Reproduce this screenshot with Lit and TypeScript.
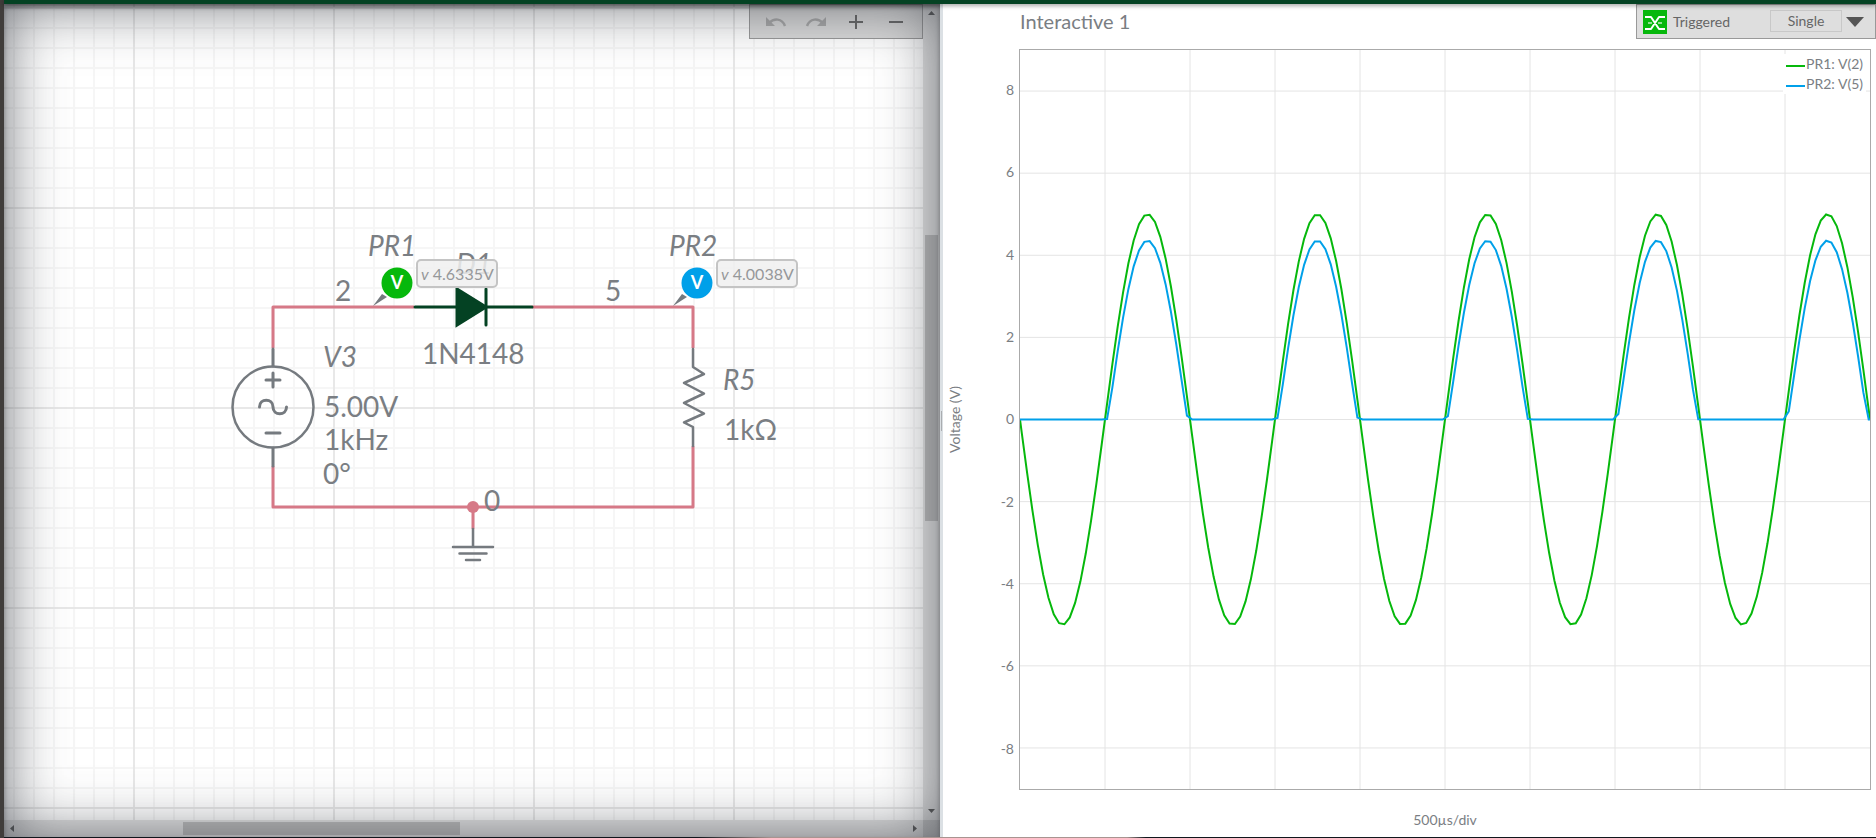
import { LitElement, html, svg, css } from "lit";
import { customElement, property } from "lit/decorators.js";

const DIV_US = 500;
const SPAN_US = 5000;
const STEP_US = 31.33;
const PHASE_US = 10.8;
const TICKS = [8, 6, 4, 2, 0, -2, -4, -6, -8];

/* Source voltage at probe PR1. */
const source = (t: number) => -5 * Math.sin((2 * Math.PI * t) / 1000);

/* Load voltage across 1k behind a 1N4148, by bisection on the diode equation. */
const load = (t: number) => {
  const v = source(t);
  if (v <= 0) return 0;
  let lo = 0;
  let hi = v;
  for (let i = 0; i < 40; i++) {
    const mid = (lo + hi) / 2;
    const sum = mid + 0.0445 * Math.log(1 + mid / 1000 / 2.52e-9);
    if (sum > v) hi = mid;
    else lo = mid;
  }
  return lo;
};

const trace = (f: (t: number) => number) => {
  const times = [0];
  for (let t = PHASE_US; t < SPAN_US; t += STEP_US) times.push(t);
  times.push(SPAN_US);
  return times.map((t) => `${t.toFixed(1)},${(-f(t) * 100).toFixed(1)}`).join(" ");
};

@customElement("schematic-canvas")
class SchematicCanvas extends LitElement {
  static styles = css`
    :host {
      display: block;
      min-width: 0;
      min-height: 0;
      overflow: hidden;
      background-color: #fff;
      background-image: linear-gradient(90deg, #e8e8e8 2px, transparent 2px),
        linear-gradient(#e8e8e8 2px, transparent 2px),
        linear-gradient(90deg, #f6f6f6 2px, transparent 2px),
        linear-gradient(#f6f6f6 2px, transparent 2px);
      background-size: 200px 200px, 200px 200px, 20px 20px, 20px 20px;
      background-position: 129px 3px, 129px 3px, 9px 3px, 9px 3px;
    }
    svg { display: block; width: 919px; height: 816px; }
    text { font-family: Lato, sans-serif; font-size: 28px; fill: #7a7e83; }
    .name { font-style: italic; }
    .wire { fill: none; stroke: #d67987; stroke-width: 3; stroke-linejoin: round; }
    .part { fill: none; stroke: #757a7f; stroke-width: 3; stroke-linecap: round; stroke-linejoin: round; }
    .thin { stroke-width: 2.5; }
    .node { fill: #d67987; }
    .diode { fill: #044223; stroke: #044223; stroke-width: 3; stroke-linecap: round; }
    .pointer { fill: #757a7f; }
    .letter { fill: #fff; font-weight: 700; font-size: 18px; text-anchor: middle; }
    .box { fill: #f0f0f0; fill-opacity: 0.85; stroke: #c4c4c4; stroke-width: 2; }
    .reading { font-size: 16px; fill: #96989a; }
  `;

  private probe(x: number, color: string, value: string) {
    return svg`
      <path class="pointer" d="M${x - 24} 306 L${x - 15} 294 L${x - 10} 297 Z"></path>
      <circle cx=${x} cy="283" r="15.5" fill=${color}></circle>
      <text class="letter" x=${x} y="289">V</text>
      <rect class="box" x=${x + 20} y="260" width="80" height="27" rx="4"></rect>
      <text class="reading" x=${x + 24} y="280"><tspan class="name">v</tspan> ${value}</text>`;
  }

  render() {
    return html`<svg viewBox="4 4 919 816" role="img" aria-label="Half-wave rectifier schematic">
      <path class="wire" d="M414 307 H273 V348 M532 307 H693 V348 M273 466 V507 H693 V446 M473 507 V529"></path>
      <circle class="node" cx="473" cy="507" r="6"></circle>
      <text x="335" y="301">2</text>
      <text x="605" y="301">5</text>
      <text x="484" y="511">0</text>
      <text class="name" x="456" y="274">D1</text>
      <path class="diode" d="M415 307 H532 M486 289 V325"></path>
      <path class="diode" d="M457 289 L486 307 L457 325 Z" stroke-width="1"></path>
      <text x="422" y="364">1N4148</text>
      <path class="part" d="M273 349 V366 M273 448 V466"></path>
      <circle class="part thin" cx="273" cy="407" r="40.5"></circle>
      <path class="part" d="M266 380 H280 M273 373 V387 M266 433 H280"></path>
      <path class="part" d="M259.500 407 C259.500 398 273 398 273 407 C273 416 286.500 416 286.500 407"></path>
      <text class="name" x="323" y="367">V3</text>
      <text x="324" y="417">5.00V</text>
      <text x="324" y="450">1kHz</text>
      <text x="323" y="484">0°</text>
      <path class="part thin" d="M693 349 V367 L704 374 L684 383 L704 393.500 L684 403 L704 413.500 L684 422.500 L693 427 V446"></path>
      <text class="name" x="723" y="390">R5</text>
      <text x="724" y="440">1kΩ</text>
      <path class="part thin" d="M473 529 V546 M453 547 H493 M459.500 553.500 H486.500 M466 560 H480"></path>
      <text class="name" x="368" y="256">PR1</text>
      <text class="name" x="669" y="256">PR2</text>
      ${this.probe(397, "#06b80c", "4.6335V")}
      ${this.probe(697, "#00a0e9", "4.0038V")}
    </svg>`;
  }
}

@customElement("schematic-pane")
class SchematicPane extends LitElement {
  static styles = css`
    :host {
      position: relative;
      display: grid;
      grid-template: minmax(0, 1fr) 17px / minmax(0, 1fr) 17px;
      background: #dcdcdc;
    }
    .shade {
      position: absolute;
      inset: 0;
      pointer-events: none;
      box-shadow: inset 0 0 60px rgba(60, 65, 72, 0.76), inset 0 3px 5px rgba(60, 60, 60, 0.5);
    }
    .tools {
      position: absolute;
      top: 0;
      right: 17px;
      display: flex;
      box-sizing: border-box;
      height: 35px;
      padding: 0 6px;
      border: 1px solid #999;
      background: rgba(216, 216, 216, 0.95);
    }
    .tool { display: grid; place-items: center; width: 40px; padding: 0; border: 0; background: none; color: #666; }
    .tool:disabled { color: #a8a8a8; }
    .tool svg { width: 24px; height: 24px; fill: none; stroke: currentColor; stroke-width: 2; }
    .tool .head { fill: currentColor; stroke: none; }
    .bar { display: flex; align-items: center; justify-content: space-between; background: #e4e4e4; }
    .bar.down { grid-column: 2; grid-row: 1; flex-direction: column; }
    .bar.across { grid-column: 1; grid-row: 2; }
    .corner { grid-column: 2; grid-row: 2; background: #c8c8c8; }
    .track { flex: 1; display: flex; align-items: stretch; align-self: stretch; }
    .down .track { flex-direction: column; padding: 0 2px; }
    .across .track { padding: 2px 0; }
    .lead-down { flex: 214; }
    .thumb-down { flex: 286; background: #bbb; }
    .rest-down { flex: 282; }
    .lead-across { flex: 162; }
    .thumb-across { flex: 277; background: #bbb; }
    .rest-across { flex: 446; }
    .arrow { display: block; width: 17px; height: 17px; fill: #555; }
  `;

  render() {
    return html`
      <schematic-canvas></schematic-canvas>
      <div class="bar down">
        <svg class="arrow" viewBox="0 0 17 17"><path d="M5 11 H12 L8.500 7 Z"></path></svg>
        <div class="track"><div class="lead-down"></div><div class="thumb-down"></div><div class="rest-down"></div></div>
        <svg class="arrow" viewBox="0 0 17 17"><path d="M5 6 H12 L8.500 10 Z"></path></svg>
      </div>
      <div class="bar across">
        <svg class="arrow" viewBox="0 0 17 17"><path d="M10 5 V12 L6 8.500 Z"></path></svg>
        <div class="track"><div class="lead-across"></div><div class="thumb-across"></div><div class="rest-across"></div></div>
        <svg class="arrow" viewBox="0 0 17 17"><path d="M7 5 V12 L11 8.500 Z"></path></svg>
      </div>
      <div class="corner"></div>
      <div class="tools" role="toolbar" aria-label="Schematic tools">
        <button class="tool" aria-label="Undo" disabled>
          <svg viewBox="0 0 24 24"><path class="head" d="M2 7 V16 H11 Z"></path><path d="M5 13 C10 8 18 8 21 16" stroke-width="2.500"></path></svg>
        </button>
        <button class="tool" aria-label="Redo" disabled>
          <svg viewBox="0 0 24 24"><path class="head" d="M22 7 V16 H13 Z"></path><path d="M19 13 C14 8 6 8 3 16" stroke-width="2.500"></path></svg>
        </button>
        <button class="tool" aria-label="Zoom in">
          <svg viewBox="0 0 24 24"><path d="M5 12 H19 M12 5 V19"></path></svg>
        </button>
        <button class="tool" aria-label="Zoom out">
          <svg viewBox="0 0 24 24"><path d="M5 12 H19"></path></svg>
        </button>
      </div>
      <div class="shade"></div>
    `;
  }
}

@customElement("grapher-plot")
class GrapherPlot extends LitElement {
  static styles = css`
    :host { position: relative; display: block; border: 1px solid #aaa; }
    .plot { display: block; position: absolute; inset: 0; width: 100%; height: 100%; }
    line, polyline { fill: none; vector-effect: non-scaling-stroke; }
    line { stroke: #e4e4e4; stroke-width: 1; }
    polyline { stroke-width: 2; }
    .pr1 { stroke: #06b80c; }
    .pr2 { stroke: #00a0e9; }
    .legend {
      position: absolute;
      top: 4px;
      right: 4px;
      margin: 0;
      padding: 0 3px;
      list-style: none;
      background: #fff;
      font: 14px/20px Lato, sans-serif;
      color: #7a7e83;
    }
    .item { display: flex; align-items: center; gap: 1px; }
    .key { width: 19px; height: 2px; margin-top: 4px; }
    .key1 { background: #06b80c; }
    .key2 { background: #00a0e9; }
  `;

  render() {
    const columns = Array.from({ length: SPAN_US / DIV_US - 1 }, (_, i) => (i + 1) * DIV_US);
    return html`
      <svg class="plot" viewBox="0 -900 5000 1800" preserveAspectRatio="none" role="img" aria-label="Voltage against time">
        ${columns.map((x) => svg`<line x1=${x} x2=${x} y1="-900" y2="900"></line>`)}
        ${TICKS.map((v) => svg`<line x1="0" x2="5000" y1=${-v * 100} y2=${-v * 100}></line>`)}
        <polyline class="pr1" points=${trace(source)}></polyline>
        <polyline class="pr2" points=${trace(load)}></polyline>
      </svg>
      <ul class="legend">
        <li class="item"><span class="key key1"></span>PR1: V(2)</li>
        <li class="item"><span class="key key2"></span>PR2: V(5)</li>
      </ul>
    `;
  }
}

@customElement("grapher-pane")
class GrapherPane extends LitElement {
  @property() heading = "Interactive 1";

  static styles = css`
    :host {
      position: relative;
      display: grid;
      grid-template: 45px minmax(0, 1fr) 47px / 24px 52px minmax(0, 1fr);
      padding-right: 5px;
      background: #fff;
      color: #7a7e83;
      font-family: Lato, sans-serif;
      font-size: 14px;
      line-height: 20px;
    }
    .title { grid-column: 3; margin: 0; padding: 5px 0 0 1px; font-size: 20px; line-height: 24px; font-weight: 400; }
    .unit { grid-column: 1; grid-row: 2; place-self: center; writing-mode: vertical-rl; transform: rotate(180deg); }
    .ticks {
      grid-column: 2;
      grid-row: 2;
      display: flex;
      flex-direction: column;
      padding-right: 5px;
      text-align: right;
    }
    .tick { flex: 1; display: grid; align-items: center; }
    grapher-plot { grid-column: 3; grid-row: 2; }
    .time { grid-column: 3; grid-row: 3; place-self: center; padding-top: 13px; }
    .controls {
      position: absolute;
      top: 0;
      right: 0;
      display: flex;
      align-items: center;
      box-sizing: border-box;
      width: 240px;
      height: 35px;
      padding-left: 6px;
      border: 1px solid #999;
      background: #dedede;
      color: #666;
    }
    .state { display: block; width: 24px; height: 24px; }
    .label { flex: 1; padding-left: 6px; }
    .single {
      width: 72px;
      height: 22px;
      margin-top: -2px;
      padding: 0;
      border: 1px solid #c8c8c8;
      background: #dedede;
      color: #666;
      font: 14px/20px Lato, sans-serif;
    }
    .more { display: grid; place-items: center; width: 26px; height: 24px; margin-right: 7px; padding: 0; border: 0; background: none; }
    .more svg { width: 18px; height: 10px; fill: #555; }
  `;

  render() {
    return html`
      <h1 class="title">${this.heading}</h1>
      <div class="unit">Voltage (V)</div>
      <div class="ticks">${TICKS.map((v) => html`<span class="tick">${v}</span>`)}</div>
      <grapher-plot></grapher-plot>
      <div class="time">500µs/div</div>
      <div class="controls">
        <svg class="state" viewBox="0 0 24 24" aria-hidden="true">
          <rect width="24" height="24" fill="#06b80c"></rect>
          <path d="M2 7 H8 L16 19 H22 M2 19 H8 L16 7 H22" fill="none" stroke="#fff" stroke-width="2" stroke-linejoin="round"></path>
          <path d="M5 13 H9 M15 13 H19" stroke="#8fe092" stroke-width="2"></path>
        </svg>
        <span class="label">Triggered</span>
        <button class="single">Single</button>
        <button class="more" aria-label="Trigger mode"><svg viewBox="0 0 18 10"><path d="M0 0 H18 L9 10 Z"></path></svg></button>
      </div>
    `;
  }
}

@customElement("app-root")
class AppRoot extends LitElement {
  static styles = css`
    :host {
      display: flex;
      flex-direction: column;
      box-sizing: border-box;
      height: 100vh;
      min-height: 480px;
      border-left: 4px solid #403d3b;
      background: #fff;
    }
    .header {
      position: relative;
      z-index: 1;
      flex: none;
      height: 4px;
      background: #044223;
      box-shadow: 0 1px 5px rgba(0, 0, 0, 0.5);
    }
    .panes { flex: 1; display: flex; min-height: 0; }
    schematic-pane { flex: 0 0 50%; min-width: 0; }
    .splitter { flex: none; display: grid; align-items: center; justify-items: center; width: 3px; background: #dbe0e4; }
    .grip { width: 1px; height: 20px; background: #aaadb0; }
    grapher-pane { flex: 1; min-width: 0; }
    .footer {
      flex: none;
      height: 1px;
      background: linear-gradient(90deg, #10161c 0 37%, #a89490 41%, #a89490 60%, #10161c 61%);
    }
  `;

  render() {
    return html`
      <div class="header"></div>
      <div class="panes">
        <schematic-pane></schematic-pane>
        <div class="splitter"><span class="grip"></span></div>
        <grapher-pane></grapher-pane>
      </div>
      <div class="footer"></div>
    `;
  }
}
